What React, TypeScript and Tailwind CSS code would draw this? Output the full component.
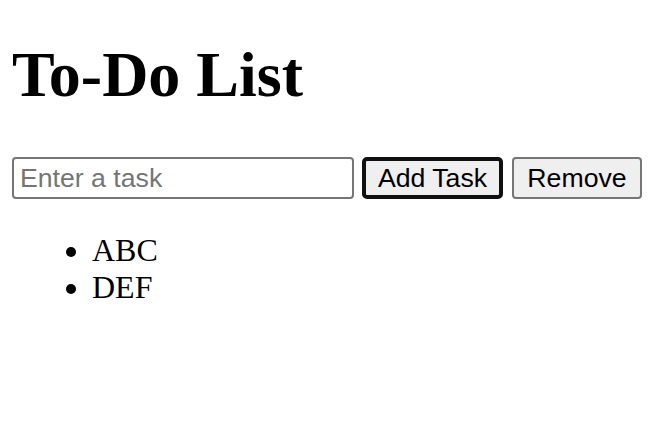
import { useState } from "react"

export default function App() {
  const [tasks] = useState(["ABC", "DEF"])
  const [text, setText] = useState("")

  return (
    <div className="min-h-screen bg-white px-[12px] pt-[38px] text-black font-[family-name:'Liberation_Serif',serif]">
      {/* Title */}
      <h1 className="mb-[45px] text-[64px] leading-[74px] font-bold">To-Do List</h1>

      {/* Input row */}
      <div className="flex items-center font-[family-name:'Liberation_Sans',Arial,sans-serif] text-[26.67px]">
        <input
          value={text}
          onChange={(e) => setText(e.target.value)}
          placeholder="Enter a task"
          className="w-[342px] h-[42px] border-2 border-[#767676] rounded-[4px] px-[6px] outline-none placeholder:text-[#757575]"
        />
        <button className="ml-[8px] w-[141px] h-[42px] bg-[#efefef] border-[4px] border-[#101010] rounded-[5px] leading-none">
          Add Task
        </button>
        <button className="ml-[9px] w-[130px] h-[42px] bg-[#efefef] border-2 border-[#767676] rounded-[4px] leading-none">
          Remove
        </button>
      </div>

      {/* Tasks */}
      <ul className="mt-[33px] pl-[80px] list-disc text-[32px] leading-[37px]">
        {tasks.map((t) => (
          <li key={t}>{t}</li>
        ))}
      </ul>
    </div>
  )
}
